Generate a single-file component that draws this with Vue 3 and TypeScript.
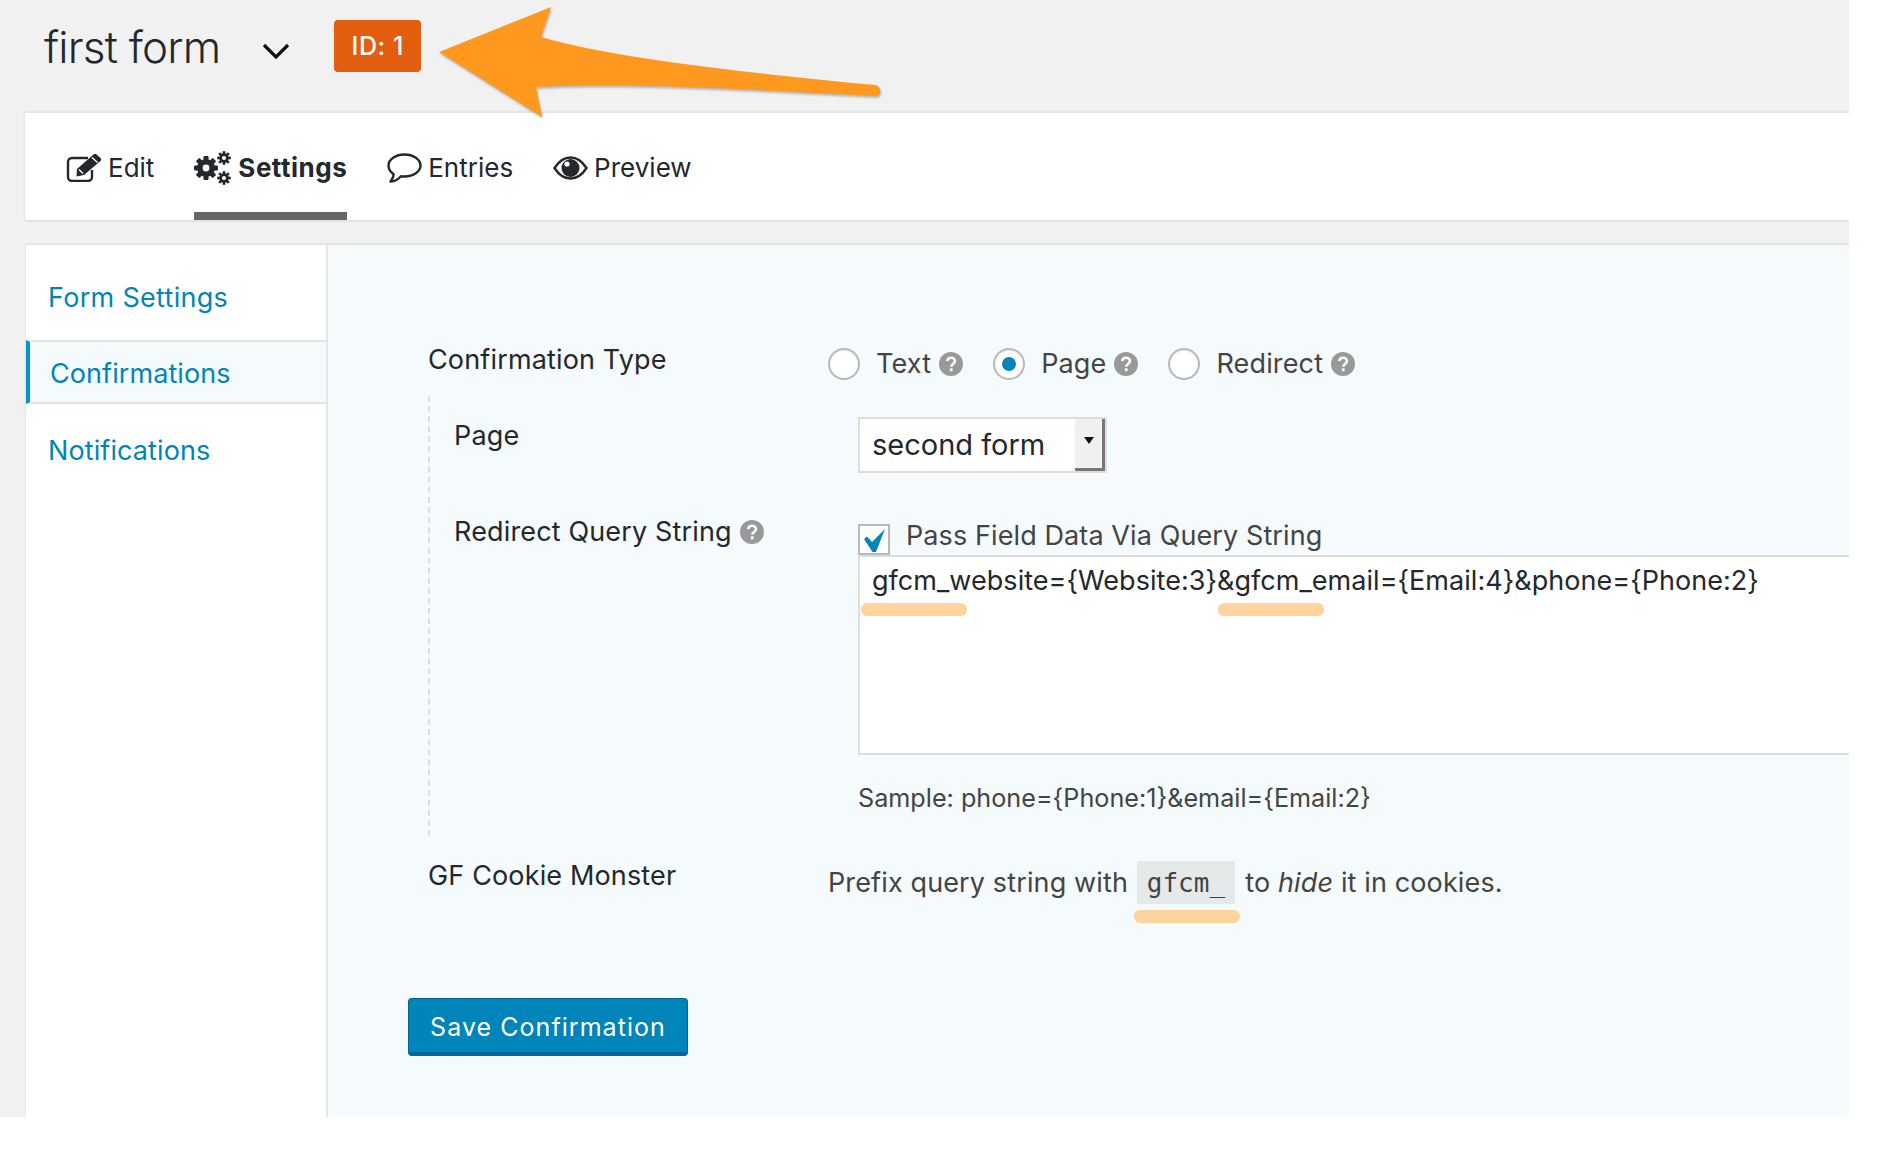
<template>
  <div class="page">
    <header class="top">
      <h1 class="title">first form</h1>
      <svg class="chevron" viewBox="0 0 28 18" width="28" height="18"><path d="M2 3l12 12L26 3" fill="none" stroke="#111" stroke-width="3.2" /></svg>
      <span class="badge">ID: 1</span>
    </header>

    <nav class="tabs">
      <a class="tab">
        <svg class="tab-icon" viewBox="0 0 36 28" width="36" height="28">
          <path d="M26 16v7a4 4 0 0 1-4 4H6a4 4 0 0 1-4-4V8a4 4 0 0 1 4-4h16" fill="none" stroke="#23282d" stroke-width="2.4" />
          <path d="M11 15L27.500 .5c1-.8 2-.8 3 0l4 3.500c1 1 1 2 0 3L18 21l-7.500 1.500z" fill="#23282d" />
          <path d="M13 15.500l4 4M26 3.500l5.500 5" stroke="#fff" stroke-width="1.300" />
        </svg>
        Edit
      </a>
      <a class="tab active">
        <svg class="tab-icon gears" viewBox="0 0 37 34" width="37" height="34">
          <g fill="#23282d">
            <g transform="translate(12 17)">
              <rect v-for="a in gearTeeth" :key="a" x="-2.500" y="-12" width="5" height="24" rx="1" :transform="`rotate(${a})`" />
              <circle r="9" />
              <circle r="3.400" fill="#fff" />
            </g>
            <g transform="translate(30 7)">
              <rect v-for="a in gearTeeth" :key="a" x="-1.300" y="-6.800" width="2.600" height="13.600" :transform="`rotate(${a})`" />
              <circle r="4.800" />
              <circle r="2" fill="#fff" />
            </g>
            <g transform="translate(30 27)">
              <rect v-for="a in gearTeeth" :key="a" x="-1.300" y="-6.800" width="2.600" height="13.600" :transform="`rotate(${a})`" />
              <circle r="4.800" />
              <circle r="2" fill="#fff" />
            </g>
          </g>
        </svg>
        Settings
      </a>
      <a class="tab">
        <svg class="tab-icon" viewBox="0 0 35 30" width="35" height="30">
          <path d="M17.500 1.500C26.500 1.500 33.500 6.500 33.500 12.500S26.500 23.500 17.500 23.500c-1.300 0-2.500-.1-3.500-.3C11.500 26 7.500 28.500 3.500 28.500c1.800-2 3-4.300 3.200-7.300C3.500 19 1.500 16 1.500 12.500 1.500 6.500 8.500 1.500 17.500 1.500z" fill="none" stroke="#23282d" stroke-width="2.400" stroke-linejoin="round" />
        </svg>
        Entries
      </a>
      <a class="tab">
        <svg class="tab-icon" viewBox="0 0 35 24" width="35" height="24">
          <path d="M1.500 12C6 5 11 1.500 17.500 1.500S29 5 33.500 12C29 19 24 22.500 17.500 22.500S6 19 1.500 12z" fill="none" stroke="#23282d" stroke-width="2.400" />
          <circle cx="17.500" cy="12" r="9" fill="#23282d" />
          <circle cx="14" cy="8" r="2.600" fill="#fff" />
        </svg>
        Preview
      </a>
    </nav>

    <div class="panel">
      <aside class="side">
        <a class="side-item first">Form Settings</a>
        <a class="side-item current">Confirmations</a>
        <a class="side-item">Notifications</a>
      </aside>

      <main class="content">
        <div class="row type-row">
          <label class="row-label">Confirmation Type</label>
          <div class="radios">
            <span v-for="r in radios" :key="r.label" class="radio-item">
              <span class="radio" :class="{ on: r.on }"></span>
              <span>{{ r.label }}</span>
              <svg class="help" viewBox="0 0 20 20" width="24" height="24"><circle cx="10" cy="10" r="10" fill="#999" /><path d="M6.800 7.600C7 5.700 8.400 4.800 10.100 4.800c1.900 0 3.200 1.100 3.200 2.700 0 2.500-3.100 2.500-3.100 4.800M10.200 13.600v2.400" fill="none" stroke="#f5fafd" stroke-width="2.200" /></svg>
            </span>
          </div>
        </div>

        <div class="nested">
          <div class="nested-row page-row">
            <label class="row-label">Page</label>
            <div class="fake-select">
              <span class="select-text">second form</span>
              <span class="select-btn"><i></i></span>
            </div>
          </div>
          <div class="nested-row query-row">
            <label class="row-label query-label">Redirect Query String<svg class="help" viewBox="0 0 20 20" width="24" height="24"><circle cx="10" cy="10" r="10" fill="#999" /><path d="M6.800 7.600C7 5.700 8.400 4.800 10.100 4.800c1.900 0 3.200 1.100 3.200 2.700 0 2.500-3.100 2.500-3.100 4.800M10.200 13.600v2.400" fill="none" stroke="#f5fafd" stroke-width="2.200" /></svg></label>
            <div class="query-field">
              <div class="check-line">
                <span class="checkbox">
                  <svg viewBox="0 0 26 26" width="26" height="26"><path d="M2 11l3-2.500 5 5.500L23 1l-9 23h-3.500z" fill="#0085ba" /></svg>
                </span>
                <span>Pass Field Data Via Query String</span>
              </div>
              <div class="query-box">gfcm_website={Website:3}&amp;gfcm_email={Email:4}&amp;phone={Phone:2}</div>
              <p class="sample">Sample: phone={Phone:1}&amp;email={Email:2}</p>
            </div>
          </div>
        </div>

        <div class="row cookie-row">
          <label class="row-label">GF Cookie Monster</label>
          <p class="cookie-text">Prefix query string with <code class="prefix">gfcm_</code> to <em>hide</em> it in cookies.</p>
        </div>

        <button class="save">Save Confirmation</button>
      </main>
    </div>

    <!-- hand drawn annotations on top of the screenshot -->
    <svg class="arrow" viewBox="0 0 460 125" width="460" height="125">
      <path d="M9 52L121 7l-10 30C190 60 340 75 445 85c7 1 7 11 0 11-120-6-240-14-339-9l6 30z" fill="#ff981f" />
    </svg>
    <span class="mark mark-a"></span>
    <span class="mark mark-b"></span>
    <span class="mark mark-c"></span>
  </div>
</template>

<script setup lang="ts">
const gearTeeth = [0, 45, 90, 135]

const radios = [
  { label: 'Text', on: false },
  { label: 'Page', on: true },
  { label: 'Redirect', on: false },
]
</script>

<style>
html, body { background: #fff; }
</style>

<style scoped>
.page {
  position: relative;
  width: 1849px;
  height: 1117px;
  overflow: hidden;
  background: #f1f1f1;
  color: #23282d;
  font-family: Inter, "Liberation Sans", sans-serif;
  font-size: 27px;
}

.top {
  display: flex;
  align-items: center;
  height: 111px;
  padding-left: 44px;
  box-sizing: border-box;
}
.title {
  margin: -18px 0 0;
  font-size: 44px;
  font-weight: 300;
  line-height: 60px;
  letter-spacing: -0.8px;
}
.chevron { margin: -10px 0 0 42px; }
.badge {
  margin: -19px 0 0 44px;
  width: 87px;
  height: 52px;
  line-height: 52px;
  text-align: center;
  background: #e35d0e;
  border-radius: 4px;
  color: #fff;
  font-size: 25px;
  font-weight: 500;
  letter-spacing: .6px;
}

.tabs {
  display: flex;
  gap: 40px;
  margin-left: 25px;
  height: 109px;
  padding-left: 41px;
  background: #fff;
  border-top: 2px solid #e5e5e5;
  box-sizing: border-box;
  box-shadow: 0 1px 2px rgba(0,0,0,0.12);
  font-size: 26px;
}
.tab {
  display: flex;
  align-items: center;
  gap: 6px;
  padding-top: 10px;
  border-bottom: 8px solid transparent;
}
.tab.active { border-bottom-color: #666; font-weight: 700; letter-spacing: .5px; gap: 7px; }

.panel {
  display: flex;
  height: 874px;
  margin: 23px 0 0 25px;
  border-top: 2px solid #e5e5e5;
  border-left: 1px solid #e5e5e5;
  border-radius: 3px 0 0 0;
}
.side {
  width: 300px;
  flex: none;
  background: #fff;
  border-right: 2px solid #e5e5e5;
  color: #0085ba;
}
.side-item {
  display: block;
  line-height: 60px;
  padding-left: 22px;
}
.side-item.first { height: 95px; line-height: 106px; letter-spacing: .3px; }
.side-item.current {
  padding-left: 20px;
  height: 60px;
  line-height: 64px;
  background: #f5fafd;
  border-left: 4px solid #0096cc;
  border-top: 2px solid #e5e5e5;
  border-bottom: 2px solid #e5e5e5;
  letter-spacing: .08px;
}
.side-item:last-child { padding-top: 17px; letter-spacing: .1px; }

.content {
  flex: 1;
  min-width: 0;
  background: #f5fafd;
  padding-left: 80px;
}

.row { display: grid; grid-template-columns: 400px 1fr; }
.type-row { padding: 0 0 0 20px; margin-top: 97px; height: 54px; }
.row-label { line-height: 36px; letter-spacing: .15px; }
.radios { display: flex; gap: 30px; line-height: 36px; margin-top: 4px; height: 36px; letter-spacing: .15px; }
.radio-item { display: flex; align-items: center; color: #444; }
.radio {
  width: 32px;
  height: 32px;
  border-radius: 50%;
  background: #fff;
  border: 2px solid #b4b9be;
  box-sizing: border-box;
  margin-right: 16px;
  position: relative;
  box-shadow: inset 0 1px 2px rgba(0,0,0,0.1);
}
.radio.on::after {
  content: "";
  position: absolute;
  inset: 7px;
  border-radius: 50%;
  background: #0085ba;
}
.help { margin-left: 8px; vertical-align: -3px; }

.nested {
  margin-left: 20px;
  padding-left: 24px;
  border-left: 2px dashed #ddd;
  height: 440px;
}
.nested-row { display: grid; grid-template-columns: 404px 1fr; }
.page-row { padding-top: 21px; }
.page-row .row-label { margin-top: 1px; }
.fake-select {
  display: flex;
  width: 249px;
  height: 56px;
  box-sizing: border-box;
  border: 2px solid #ddd;
  background: #fff;
  font-size: 29px;
}
.select-text { flex: 1; padding-left: 12px; line-height: 52px; }
.select-btn {
  width: 30px;
  background: #f0f0f0;
  border-right: 3px solid #777;
  border-bottom: 3px solid #777;
  box-sizing: border-box;
  display: flex;
  justify-content: center;
  padding-top: 18px;
}
.select-btn i {
  width: 0;
  height: 0;
  border: 5px solid transparent;
  border-top: 7px solid #111;
}
.query-row { padding-top: 51px; }
.query-label { margin-top: -10px; }
.check-line { display: flex; align-items: flex-start; gap: 16px; height: 31px; color: #444; line-height: 24px; letter-spacing: .1px; }
.checkbox {
  width: 32px;
  height: 31px;
  flex: none;
  box-sizing: border-box;
  border: 2px solid #b4b9be;
  background: #fff;
}
.checkbox svg { display: block; margin: 2px 0 0 2px; }
.query-box {
  width: 994px;
  height: 200px;
  box-sizing: border-box;
  padding: 6px 12px;
  background: #fff;
  border: 2px solid #ddd;
  border-right: 0;
  line-height: 36px;
  letter-spacing: .04px;
}
.sample { margin: 26px 0 0; font-size: 25.200px; line-height: 34px; color: #444; }

.cookie-row { padding-left: 20px; margin-top: 19px; }
.cookie-row .row-label { margin-top: 3px; }
.cookie-text { margin: 6px 0 0; color: #444; line-height: 44px; white-space: nowrap; letter-spacing: .13px; }
.prefix {
  display: inline-block;
  height: 43px;
  margin: 0 2.500px 0 1px;
  padding: 0 10px;
  background: #e5e9ea;
  font-family: "DejaVu Sans Mono", "Liberation Mono", monospace;
  font-size: 26px;
  letter-spacing: 0;
}

.save {
  display: block;
  margin-top: 93px;
  width: 280px;
  height: 58px;
  border: 1px solid #006799;
  border-bottom-width: 4px;
  border-radius: 4px;
  background: #0085ba;
  color: #fff;
  font-family: inherit;
  font-size: 25px;
  letter-spacing: 1.050px;
  padding-top: 4px;
}

.arrow { position: absolute; left: 430px; top: 0; filter: drop-shadow(1px 2px 1px rgba(0,0,0,0.25)); }
.mark { position: absolute; height: 13px; background: #ffd29e; border-radius: 6px; }
.mark-a { left: 861px; top: 603px; width: 106px; }
.mark-b { left: 1218px; top: 603px; width: 106px; }
.mark-c { left: 1134px; top: 910px; width: 106px; }
</style>
